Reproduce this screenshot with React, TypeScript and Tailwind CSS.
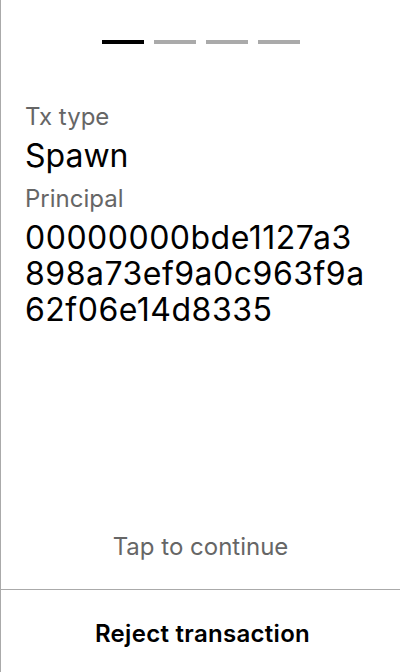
export default function App() {
  const steps = [true, false, false, false];
  const principal = ['00000000bde1127a3', '898a73ef9a0c963f9a', '62f06e14d8335'];

  return (
    <div
      className="flex h-[672px] w-[400px] flex-col border-l border-[#aaaaaa] bg-white text-black"
      style={{ fontFamily: 'Inter, "Noto Sans", sans-serif' }}
    >
      {/* step indicator */}
      <div className="flex justify-center gap-[10px] pt-10">
        {steps.map((active, i) => (
          <div
            key={i}
            className={active ? 'h-1 w-[42px] bg-black' : 'h-1 w-[42px] bg-[#aaaaaa]'}
          />
        ))}
      </div>

      {/* fields */}
      <div className="flex flex-col px-6 pt-[57px]">
        <p className="text-[24px] leading-[32px] text-[#666666]">Tx type</p>
        <p className="mt-[3px] text-[32px] leading-[40px]">Spawn</p>
        <p className="mt-[7px] text-[24px] leading-[32px] text-[#666666]">Principal</p>
        <p className="mt-[5px] flex flex-col text-[32px] leading-[36px] tracking-[0.5px]">
          {principal.map((line) => (
            <span key={line} className="whitespace-nowrap">{line}</span>
          ))}
        </p>
      </div>

      <div className="flex-1" />

      <p className="pb-[26px] text-center text-[24px] leading-[32px] text-[#666666]">
        Tap to continue
      </p>

      <button className="flex h-[83px] w-full items-start justify-center border-t border-[#aaaaaa] pl-1 pt-[28px] text-center text-[24px] font-semibold leading-[32px] tracking-[0.3px]">
        Reject transaction
      </button>
    </div>
  );
}
